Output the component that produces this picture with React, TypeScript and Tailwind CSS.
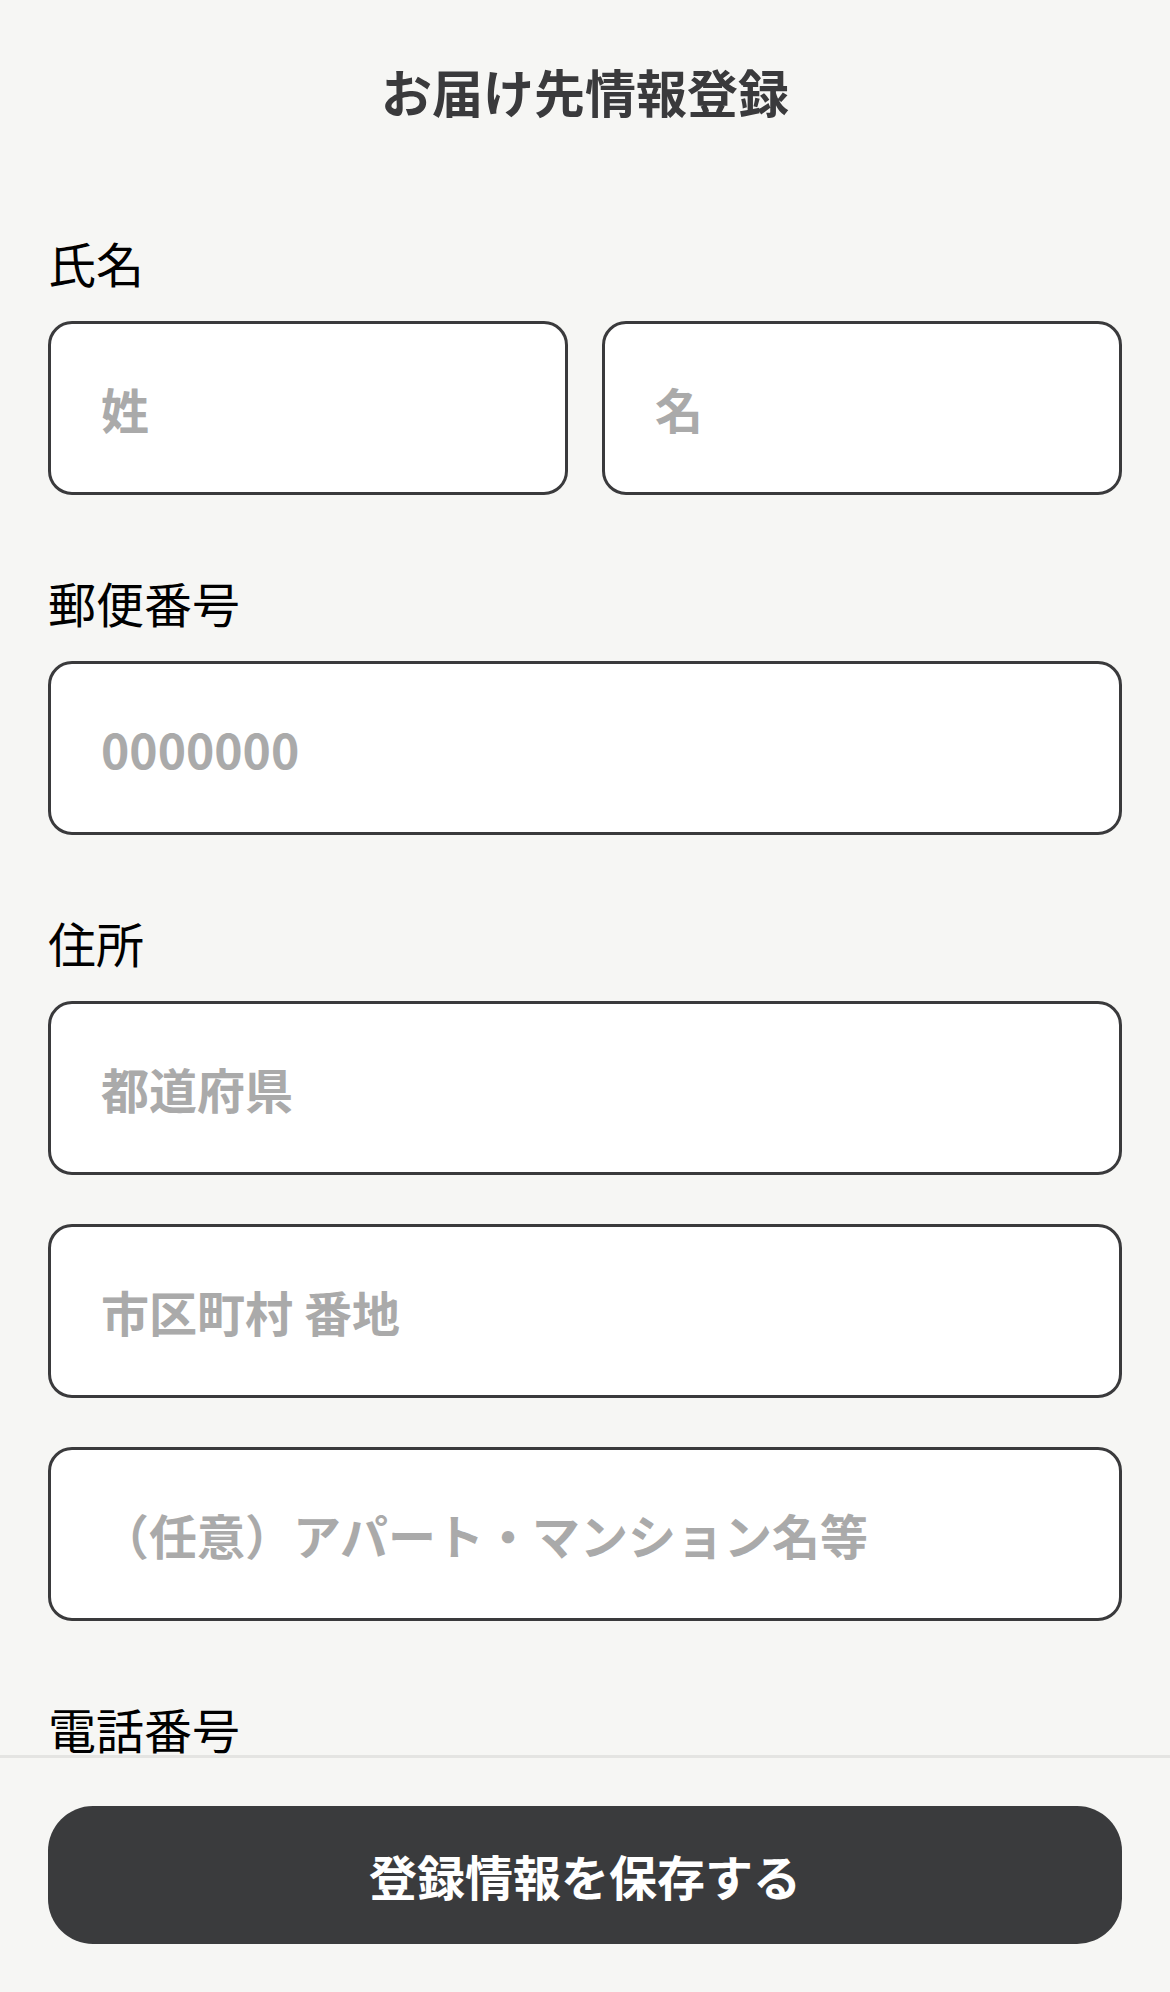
import { useState } from 'react';

const inputCls =
  "w-full h-[174px] rounded-[24px] border-[3px] border-[#3a3a3c] bg-white pl-[50px] pr-[46px] text-[48px] font-bold text-[#222] placeholder:text-[#aaaaaa] placeholder:font-bold outline-none";

const Field = ({ placeholder, value, onChange }: { placeholder: string; value: string; onChange: (v: string) => void }) => (
  <input
    className={inputCls}
    placeholder={placeholder}
    value={value}
    onChange={(e) => onChange(e.target.value)}
  />
);

const Label = ({ children }: { children: string }) => (
  <div className="text-[48px] leading-[48px] text-black mb-[35px]">{children}</div>
);

export default function App() {
  const [form, setForm] = useState({
    sei: '',
    mei: '',
    zip: '',
    pref: '',
    city: '',
    building: '',
    tel: '',
  });

  const set = (key: keyof typeof form) => (v: string) => setForm((prev) => ({ ...prev, [key]: v }));

  return (
    <div className="h-[1992px] flex flex-col bg-[#f6f6f4] font-['Noto_Sans_CJK_JP','Noto_Sans',sans-serif]">
      <div className="flex-1 overflow-hidden px-[48px]">
        <h1 className="pt-[66px] text-center text-[51px] leading-[51px] font-bold text-[#3a3a3c]">お届け先情報登録</h1>

        <div className="mt-[121px]">
          <Label>氏名</Label>
          <div className="flex gap-[34px]">
            <Field placeholder="姓" value={form.sei} onChange={set('sei')} />
            <Field placeholder="名" value={form.mei} onChange={set('mei')} />
          </div>
        </div>

        <div className="mt-[83px]">
          <Label>郵便番号</Label>
          <Field placeholder="0000000" value={form.zip} onChange={set('zip')} />
        </div>

        <div className="mt-[83px]">
          <Label>住所</Label>
          <div className="flex flex-col gap-[49px]">
            <Field placeholder="都道府県" value={form.pref} onChange={set('pref')} />
            <Field placeholder="市区町村 番地" value={form.city} onChange={set('city')} />
            <Field placeholder="（任意）アパート・マンション名等" value={form.building} onChange={set('building')} />
          </div>
        </div>

        <div className="mt-[83px]">
          <Label>電話番号</Label>
          <Field placeholder="00000000000" value={form.tel} onChange={set('tel')} />
        </div>
      </div>

      <div className="border-t-[3px] border-[#e4e4e2] bg-[#f6f6f4] px-[48px] pt-[48px] pb-[48px]">
        <button className="w-full h-[138px] rounded-[45px] bg-[#3a3b3d] text-white text-[48px] font-bold">
          登録情報を保存する
        </button>
      </div>
    </div>
  );
}
